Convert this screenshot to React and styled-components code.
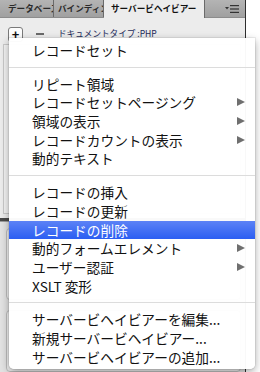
import React from "react";
import styled, { createGlobalStyle } from "styled-components";

const GlobalStyle = createGlobalStyle`
  html, body {
    margin: 0;
    padding: 0;
    background: #ffffff;
  }
  body {
    font-family: "Noto Sans CJK JP", "Noto Sans", sans-serif;
    overflow: hidden;
  }
`;

const Page = styled.div`
  position: relative;
  width: 260px;
  height: 372px;
  overflow: hidden;
`;

const Panel = styled.div`
  width: 245px;
  height: 372px;
  border-right: 1px solid #2e2e2e;
  background: #ececec;
  display: flex;
  flex-direction: column;
`;

const TabBar = styled.div`
  height: 17px;
  display: flex;
  align-items: stretch;
  background: linear-gradient(#b4b4b4, #a0a0a0);
  border-bottom: 1px solid #8c8c8c;
`;

const Tab = styled.div`
  width: ${(p) => p.$w}px;
  box-sizing: border-box;
  padding-left: ${(p) => p.$pad}px;
  border-right: 1px solid #6a6a6a;
  background: ${(p) => (p.$active ? "#ececec" : "transparent")};
  color: ${(p) => (p.$active ? "#111" : "#2a2a2a")};
  font-size: 8.6px;
  font-weight: 700;
  line-height: 17px;
  white-space: nowrap;
  overflow: hidden;
  margin-bottom: ${(p) => (p.$active ? "-1px" : "0")};
`;

const TabFill = styled.div`
  flex: 1;
  display: flex;
  align-items: center;
  justify-content: flex-end;
  padding-right: 5px;
`;

const Toolbar = styled.div`
  height: 22px;
  display: flex;
  align-items: center;
  padding: 6px 0 0 8px;
  box-sizing: border-box;
  height: 28px;
`;

const PlusButton = styled.div`
  width: 13px;
  height: 13px;
  border: 1px solid #7a7a7a;
  border-radius: 3px;
  background: #fdfdfd;
  display: flex;
  align-items: center;
  justify-content: center;
  font-family: "Liberation Sans", sans-serif;
  font-size: 13px;
  font-weight: 700;
  line-height: 1;
  color: #111;
`;

const Minus = styled.div`
  width: 8px;
  height: 2px;
  background: #6a6a6a;
  margin: 0 14px 0 13px;
`;

const DocType = styled.div`
  font-size: 8.6px;
  color: #1c2a5a;
  white-space: nowrap;
  margin-top: -3px;
`;

const ListBox = styled.div`
  margin: 0 4px 0 3px;
  height: 183px;
  background: #f3f3f3;
  border: 1px solid #c9c9c9;
`;

const Splitter = styled.div`
  height: 3px;
  margin-top: 4px;
  background: #4a4a4a;
  border-bottom: 1px solid #9a9a9a;
`;

const Lower = styled.div`
  flex: 1;
  background: #e2e2e2;
  padding: 6px 4px 0 6px;
  display: flex;
  flex-direction: column;
  gap: 10px;
`;

const Field = styled.div`
  height: ${(p) => p.$h}px;
  border: 1px solid #bdbdbd;
  border-radius: 4px;
  background: #f0f0f0;
`;

const Menu = styled.div`
  position: absolute;
  left: 9px;
  top: 38px;
  width: 246px;
  padding: 3px 0;
  background: rgba(255, 255, 255, 0.97);
  border-radius: 0 0 5px 5px;
  box-shadow: 0 3px 9px rgba(0, 0, 0, 0.35), 0 0 0 1px rgba(0, 0, 0, 0.06);
`;

const Item = styled.div`
  position: relative;
  height: 18.7px;
  line-height: 18.7px;
  padding-left: 23px;
  font-size: 13.7px;
  white-space: nowrap;
  color: ${(p) => (p.$active ? "#ffffff" : "#111111")};
  background: ${(p) =>
    p.$active ? "linear-gradient(#5c82f6, #2b5ef2)" : "transparent"};
`;

const Arrow = styled.span`
  position: absolute;
  right: 10px;
  top: 5px;
  width: 0;
  height: 0;
  border-left: 8px solid #6f6f6f;
  border-top: 4.5px solid transparent;
  border-bottom: 4.5px solid transparent;
`;

const Separator = styled.div`
  height: 1px;
  margin: 7px 0;
  background: #dcdcdc;
`;

const MenuIcon = () => (
  <svg width="16" height="10" viewBox="0 0 16 10">
    <path d="M1 3 L5 3 L3 5.5 Z" fill="#333" />
    <rect x="6" y="1" width="9" height="1.2" fill="#333" />
    <rect x="6" y="4.4" width="9" height="1.2" fill="#333" />
    <rect x="6" y="7.8" width="9" height="1.2" fill="#333" />
  </svg>
);

const groups = [
  [{ label: "レコードセット" }],
  [
    { label: "リピート領域" },
    { label: "レコードセットページング", sub: true },
    { label: "領域の表示", sub: true },
    { label: "レコードカウントの表示", sub: true },
    { label: "動的テキスト" },
  ],
  [
    { label: "レコードの挿入" },
    { label: "レコードの更新" },
    { label: "レコードの削除", active: true },
    { label: "動的フォームエレメント", sub: true },
    { label: "ユーザー認証", sub: true },
    { label: "XSLT 変形" },
  ],
  [
    { label: "サーバービヘイビアーを編集..." },
    { label: "新規サーバービヘイビアー..." },
    { label: "サーバービヘイビアーの追加..." },
  ],
];

export default function App() {
  return (
    <Page>
      <GlobalStyle />
      <Panel>
        <TabBar>
          <Tab $w={54} $pad={8}>データベース</Tab>
          <Tab $w={50} $pad={4}>バインディング</Tab>
          <Tab $w={101} $pad={7} $active>
            サーバービヘイビアー
          </Tab>
          <TabFill>
            <MenuIcon />
          </TabFill>
        </TabBar>
        <Toolbar>
          <PlusButton>+</PlusButton>
          <Minus />
          <DocType>ドキュメントタイプ :PHP</DocType>
        </Toolbar>
        <ListBox />
        <Splitter />
        <Lower>
          <Field $h={70} />
          <Field $h={60} />
        </Lower>
      </Panel>
      <Menu>
        {groups.map((g, gi) => (
          <React.Fragment key={gi}>
            {gi > 0 && <Separator />}
            {g.map((it) => (
              <Item key={it.label} $active={it.active}>
                {it.label}
                {it.sub && <Arrow />}
              </Item>
            ))}
          </React.Fragment>
        ))}
      </Menu>
    </Page>
  );
}
